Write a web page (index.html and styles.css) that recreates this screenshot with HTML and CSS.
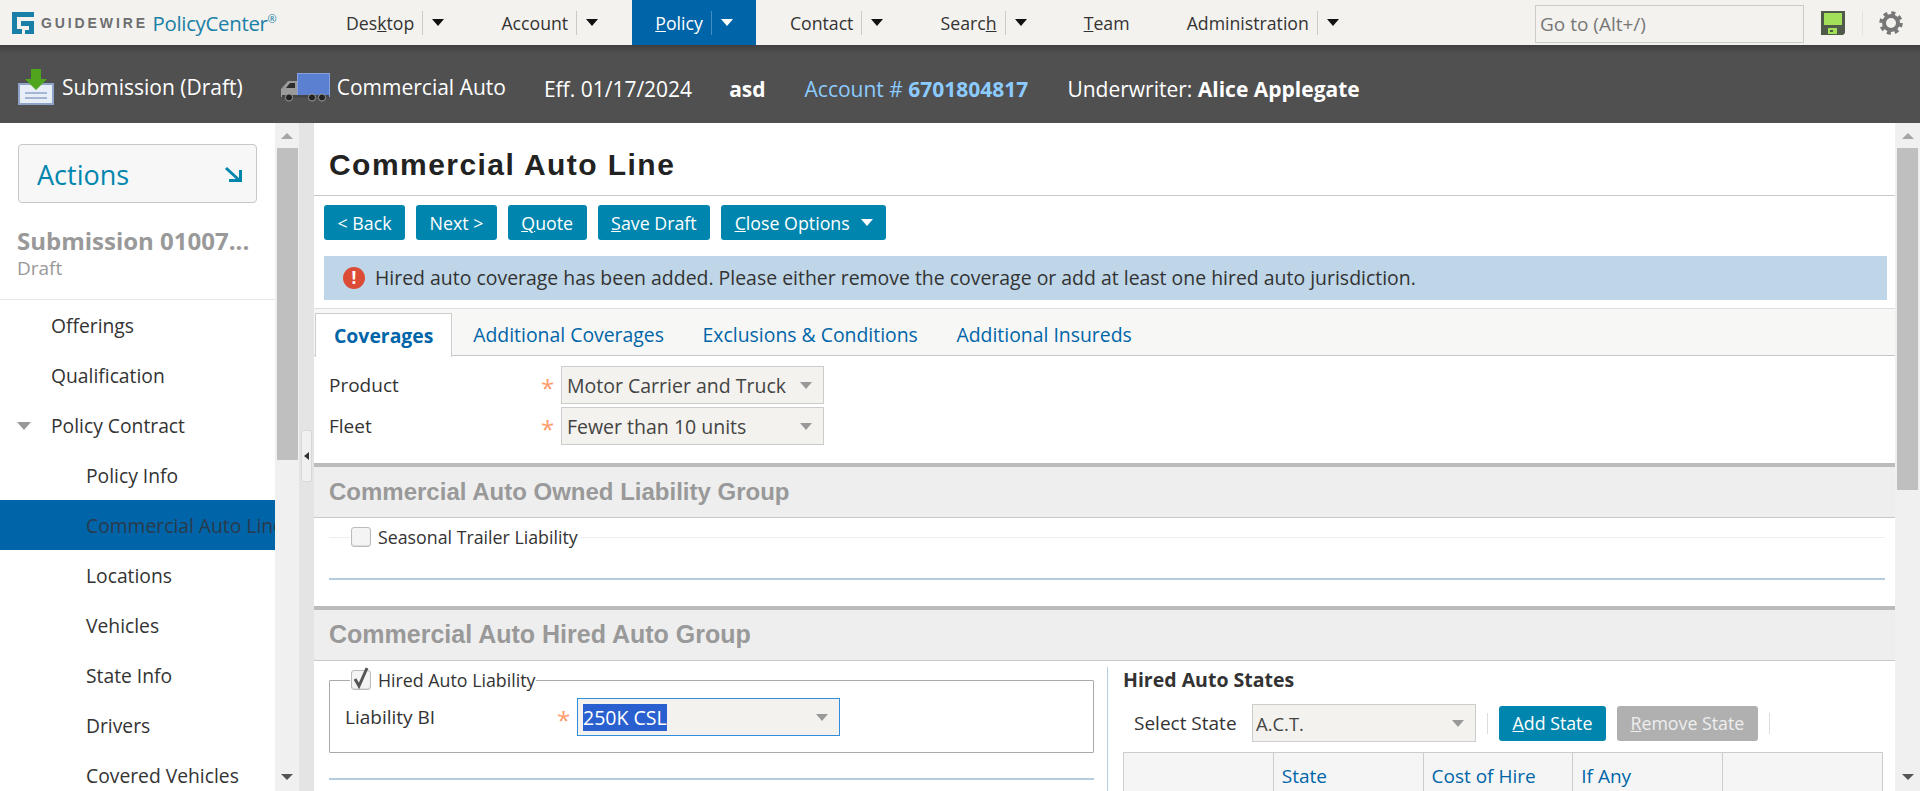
FILE: index.html
```html
<!DOCTYPE html>
<html lang="en">
<head>
  <meta charset="UTF-8" />
  <title>Guidewire PolicyCenter</title>
  <link rel="stylesheet" href="styles.css">
</head>
<body>
<header class="topbar">
  <div class="logo">
    <svg class="logo-mark" viewBox="0 0 22 22" width="22" height="22">
      <path fill="#1a7fa6" d="M0 0h22v5H5v12h5v5H0zM9 9h13v13h-9v-4h4v-4H9z"/>
    </svg>
    <span class="logo-word">GUIDEWIRE</span>
    <span class="logo-product">PolicyCenter<sup>®</sup></span>
  </div>
  <nav class="tabs-main">
    <a class="nav-item">Des<u>k</u>top<i class="nav-sep"></i><i class="caret"></i></a>
    <a class="nav-item">Account<i class="nav-sep"></i><i class="caret"></i></a>
    <a class="nav-item active"><u>P</u>olicy<i class="nav-sep"></i><i class="caret"></i></a>
    <a class="nav-item">Contact<i class="nav-sep"></i><i class="caret"></i></a>
    <a class="nav-item">Searc<u>h</u><i class="nav-sep"></i><i class="caret"></i></a>
    <a class="nav-item"><u>T</u>eam</a>
    <a class="nav-item">Administration<i class="nav-sep"></i><i class="caret"></i></a>
  </nav>
  <div class="top-tools">
    <input class="goto" type="text" placeholder="Go to (Alt+/)" />
    <svg viewBox="0 0 24 24" width="24" height="24">
      <path fill="#4f5a4a" d="M0 0h24v22l-2 2H0z"/>
      <rect fill="#a3e05a" x="3" y="2" width="18" height="12"/>
      <rect fill="#a3e05a" x="7" y="17" width="9" height="6"/>
      <rect fill="#4f5a4a" x="9" y="19" width="3" height="2"/>
    </svg>
    <i class="tool-sep"></i>
    <svg viewBox="0 0 24 24" width="24" height="24">
      <circle cx="12" cy="12" r="7" fill="none" stroke="#777" stroke-width="4"/>
      <circle cx="12" cy="12" r="10" fill="none" stroke="#777" stroke-width="3.500" stroke-dasharray="4 3.850"/>
    </svg>
  </div>
</header>

<div class="infobar">
  <span class="info-item info-sub">
    <svg viewBox="0 0 36 36" width="36" height="36">
      <path fill="#e8eef8" stroke="#8fa3c8" stroke-width="2" d="M1 15h34v20H1z"/>
      <path fill="none" stroke="#8fa3c8" stroke-width="1.500" d="M7 24h22M7 29h22"/>
      <path fill="#4fa51e" d="M13 0h10v10h6L18 21 7 10h6z"/>
    </svg>
    Submission (Draft)
  </span>
  <span class="info-item info-line">
    <svg viewBox="0 0 50 30" width="50" height="30">
      <rect x="16.500" y="1.500" width="32" height="23" fill="#5b80d2" stroke="#86a2dc"/>
      <path fill="#9a9a9a" d="M0 25v-8l7-8h9v16z"/>
      <path fill="#2c2c2c" d="M5 16l4-5h5v5z"/>
      <rect x="1" y="23" width="47" height="2.500" fill="#444"/>
      <circle cx="8" cy="25.500" r="3.600" fill="#222" stroke="#999"/>
      <circle cx="31" cy="25.500" r="3.600" fill="#222" stroke="#999"/>
      <circle cx="41" cy="25.500" r="3.600" fill="#222" stroke="#999"/>
    </svg>
    Commercial Auto
  </span>
  <span class="info-text info-eff">Eff. 01/17/2024</span>
  <b class="info-text info-name">asd</b>
  <span class="info-text info-acct">Account # <b>6701804817</b></span>
  <span class="info-text info-uw">Underwriter: <b>Alice Applegate</b></span>
</div>

<div class="workspace">
  <aside class="sidebar">
    <div class="actions-wrap">
      <div class="actions-btn">
        <span class="actions-label">Actions</span>
        <svg viewBox="0 0 18 18" width="18" height="18">
          <path fill="none" stroke="#0086ae" stroke-width="3" d="M2 3l13 12M5 15.500h11.500V5"/>
        </svg>
      </div>
    </div>
    <div class="job-title">
      <div class="job-name">Submission 01007...</div>
      <div class="job-state">Draft</div>
    </div>
    <ul class="side-list">
      <li>Offerings</li>
      <li>Qualification</li>
      <li class="open"><i class="open-tri"></i>Policy Contract</li>
      <li class="sub">Policy Info</li>
      <li class="sub current">Commercial Auto Line</li>
      <li class="sub">Locations</li>
      <li class="sub">Vehicles</li>
      <li class="sub">State Info</li>
      <li class="sub">Drivers</li>
      <li class="sub">Covered Vehicles</li>
    </ul>
  </aside>
  <div class="scrollbar scrollbar-side">
    <i class="sb-up"></i>
    <div class="sb-thumb"></div>
    <i class="sb-down"></i>
  </div>
  <div class="splitter">
    <div class="splitter-handle"><i></i></div>
  </div>

  <main class="content">
    <h1 class="page-title">Commercial Auto Line</h1>
    <div class="toolbar">
      <button class="btn">&lt; Back</button>
      <button class="btn">Next &gt;</button>
      <button class="btn"><u>Q</u>uote</button>
      <button class="btn"><u>S</u>ave Draft</button>
      <button class="btn"><u>C</u>lose Options<i class="caret caret-white"></i></button>
    </div>
    <div class="alert">
      <span class="alert-icon">!</span>
      Hired auto coverage has been added. Please either remove the coverage or add at least one hired auto jurisdiction.
    </div>
    <div class="tabs">
      <a class="tab active">Coverages</a>
      <a class="tab">Additional Coverages</a>
      <a class="tab">Exclusions &amp; Conditions</a>
      <a class="tab">Additional Insureds</a>
    </div>

    <div class="form-top">
      <div class="field">
        <label>Product</label><span class="req">*</span>
        <div class="select">Motor Carrier and Truck<i class="sel-arrow"></i></div>
      </div>
      <div class="field">
        <label>Fleet</label><span class="req">*</span>
        <div class="select">Fewer than 10 units<i class="sel-arrow"></i></div>
      </div>
    </div>

    <section class="group">
      <h2 class="group-head">Commercial Auto Owned Liability Group</h2>
      <div class="group-body group-owned">
        <fieldset class="cov cov-off">
          <legend><span class="check"></span>Seasonal Trailer Liability</legend>
        </fieldset>
      </div>
    </section>

    <section class="group group-hired">
      <h2 class="group-head">Commercial Auto Hired Auto Group</h2>
      <div class="hired-cols">
        <div class="hired-left">
          <fieldset class="cov cov-on">
            <legend>
              <span class="check">
                <svg viewBox="0 0 20 20" width="20" height="20">
                  <path fill="none" stroke="#555" stroke-width="3" d="M4 9l4 7 8-18"/>
                </svg>
              </span>Hired Auto Liability
            </legend>
            <div class="field field-bi">
              <label>Liability BI</label><span class="req">*</span>
              <div class="select select-focus"><span class="sel-text">250K CSL</span><i class="sel-arrow"></i></div>
            </div>
          </fieldset>
          <div class="rule-blue"></div>
        </div>
        <div class="hired-right">
          <h3 class="states-head">Hired Auto States</h3>
          <div class="states-bar">
            <label>Select State</label>
            <div class="select select-state">A.C.T.<i class="sel-arrow"></i></div>
            <i class="bar-sep"></i>
            <button class="btn"><u>A</u>dd State</button>
            <button class="btn btn-off"><u>R</u>emove State</button>
            <i class="bar-sep"></i>
          </div>
          <table class="states-table">
            <tr><th></th><th>State</th><th>Cost of Hire</th><th>If Any</th><th></th></tr>
          </table>
        </div>
      </div>
    </section>
  </main>
  <div class="scrollbar scrollbar-main">
    <i class="sb-up"></i>
    <div class="sb-thumb"></div>
    <i class="sb-down"></i>
  </div>
</div>
</body>
</html>
```

FILE: styles.css
```css
/* Reset and base */
* {
  box-sizing: border-box;
}
html, body {
  height: 100%;
}
body {
  margin: 0;
  display: flex;
  flex-direction: column;
  overflow: hidden;
  font-family: 'Open Sans', 'Noto Sans', sans-serif;
  font-size: 19px;
  color: #333;
  background: #fff;
}
i {
  display: block;
  font-style: normal;
}

/* Top bar */
.topbar {
  flex: none;
  height: 45px;
  display: flex;
  align-items: center;
  background: #f3f2ee;
}
.logo {
  width: 323px;
  padding-left: 12px;
  display: flex;
  align-items: center;
  flex: none;
}
.logo-word {
  margin-left: 7px;
  font-family: 'Liberation Sans', sans-serif;
  font-weight: 700;
  font-size: 14px;
  letter-spacing: 2.900px;
  color: #6d6e70;
}
.logo-product {
  margin-left: 4.500px;
  font-size: 20.400px;
  letter-spacing: -0.3px;
  color: #1a7fa6;
}
.logo-product sup {
  font-size: 11px;
  line-height: 0;
}
.tabs-main {
  display: flex;
  gap: 11.100px;
  height: 45px;
}
.nav-item {
  display: flex;
  align-items: center;
  padding: 0 23px;
  color: #333;
  font-size: 17.700px;
}
.nav-item.active {
  background: #0065a8;
  color: #fff;
}
.nav-sep {
  width: 1px;
  height: 24px;
  margin: 0 9px 0 8px;
  background: #c9c9c9;
}
.nav-item.active .nav-sep {
  background: #3f8ec4;
}
.caret {
  width: 0;
  height: 0;
  border-left: 6px solid transparent;
  border-right: 6px solid transparent;
  border-top: 7px solid #111;
}
.nav-item.active .caret,
.caret-white {
  border-top-color: #fff;
}
.top-tools {
  margin-left: auto;
  display: flex;
  align-items: center;
  padding-right: 17px;
}
.goto {
  width: 269px;
  height: 38px;
  margin: 5px 17px 2px 0;
  padding: 0 4px;
  border: 1px solid #ccc;
  background: #f3f2ee;
  font-family: inherit;
  font-size: 19px;
}
.goto::placeholder {
  color: #777;
  opacity: 1;
}
.tool-sep {
  width: 1px;
  height: 24px;
  margin: 0 16px 0 17px;
  background: #e2e2e0;
}

/* Dark info bar */
.infobar {
  flex: none;
  height: 78px;
  display: flex;
  align-items: center;
  padding: 10px 0 0 18px;
  background: linear-gradient(#3f3f3f, #505050 9px);
  color: #fff;
  font-size: 21px;
}
.info-item {
  display: flex;
  align-items: center;
  gap: 8px;
  margin-top: -5px;
}
.info-line {
  margin-left: 38px;
  gap: 6px;
}
.info-eff {
  margin-left: 38px;
}
.info-name {
  margin-left: 37px;
}
.info-acct {
  margin-left: 39px;
  color: #8ccbff;
}
.info-uw {
  margin-left: 39px;
}

/* Workspace */
.workspace {
  flex: 1;
  min-height: 0;
  display: flex;
}
.sidebar {
  flex: none;
  width: 275px;
  overflow: hidden;
}
.actions-wrap {
  padding: 21px 18px 0;
}
.actions-btn {
  height: 59px;
  padding: 0 14px 0 18px;
  display: flex;
  align-items: center;
  justify-content: space-between;
  border: 1px solid #c8c8c8;
  border-radius: 4px;
  background: #f7f7f7;
  color: #0086ae;
  font-size: 27px;
}
.actions-label {
  padding-top: 2px;
}
.job-title {
  padding: 23px 0 19px 17px;
  border-bottom: 1px solid #e8e8e8;
}
.job-name {
  font-size: 24px;
  font-weight: 700;
  line-height: 30px;
  color: #999;
  white-space: nowrap;
}
.job-state {
  font-size: 19px;
  line-height: 24px;
  color: #999;
}
.side-list {
  list-style: none;
  margin: 0;
  padding: 0;
  font-size: 19.300px;
}
.side-list li {
  position: relative;
  height: 50px;
  line-height: 52px;
  padding-left: 51px;
  white-space: nowrap;
  overflow: hidden;
}
.side-list li.sub {
  padding-left: 86px;
}
.side-list li.current {
  background: #0065a8;
  color: #2b3a4a;
}
.open-tri {
  position: absolute;
  left: 17px;
  top: 22px;
  width: 0;
  height: 0;
  border-left: 7px solid transparent;
  border-right: 7px solid transparent;
  border-top: 8px solid #999;
}

/* Scrollbars */
.scrollbar {
  flex: none;
  display: flex;
  flex-direction: column;
  align-items: center;
  background: #f0f0f0;
  padding-top: 10px;
}
.scrollbar-side {
  width: 24px;
}
.scrollbar-main {
  width: 25px;
}
.sb-thumb {
  width: 21px;
  margin-top: 9px;
  background: #bfbfbf;
}
.scrollbar-side .sb-thumb {
  height: 312px;
}
.scrollbar-main .sb-thumb {
  height: 342px;
}
.sb-up,
.sb-down {
  width: 0;
  height: 0;
  border-left: 6px solid transparent;
  border-right: 6px solid transparent;
}
.sb-up {
  border-bottom: 6px solid #a5a5a5;
}
.sb-down {
  margin-top: auto;
  margin-bottom: 11px;
  border-top: 6px solid #555;
}
.splitter {
  flex: none;
  width: 15px;
  background: #e4e4e4;
  padding: 307px 2px 0;
}
.splitter-handle {
  height: 52px;
  display: flex;
  align-items: center;
  justify-content: center;
  background: #f0f0f0;
  border: 1px solid #d8d8d8;
  border-radius: 2px;
}
.splitter-handle i {
  border-top: 4px solid transparent;
  border-bottom: 4px solid transparent;
  border-right: 5px solid #333;
}

/* Main content */
.content {
  flex: 1;
  min-width: 0;
  overflow: hidden;
}
.page-title {
  margin: 0;
  height: 73px;
  padding: 0 15px;
  border-bottom: 1px solid #c8c8c8;
  font-family: 'Liberation Sans', sans-serif;
  font-size: 30px;
  font-weight: 700;
  letter-spacing: 1.450px;
  line-height: 84px;
  color: #222;
}
.toolbar {
  display: flex;
  gap: 11px;
  padding: 9px 10px 16px;
}
.btn {
  height: 35px;
  padding: 0 13.500px;
  display: flex;
  align-items: center;
  border: none;
  border-radius: 3px;
  background: #0086ae;
  color: #fff;
  font-family: inherit;
  font-size: 17.800px;
}
.btn-off {
  background: #b0b0b0;
  color: #eee;
}
.caret-white {
  margin-left: 11px;
}
.alert {
  height: 44px;
  margin: 0 8px 0 10px;
  padding: 0 0 2px 19px;
  display: flex;
  align-items: center;
  gap: 10px;
  background: #bed6e8;
  color: #333;
  font-size: 19.450px;
}
.alert-icon {
  width: 22px;
  height: 22px;
  margin-top: 2px;
  border-radius: 50%;
  background: #dc4b36;
  color: #fff;
  font-weight: 700;
  font-size: 17px;
  line-height: 22px;
  text-align: center;
}
.tabs {
  margin-top: 8px;
  height: 48px;
  padding: 4px 0 0 1px;
  display: flex;
  border-top: 1px solid #ddd;
  border-bottom: 1px solid #c8c8c8;
  background: #f7f7f5;
}
.tab {
  height: 43px;
  line-height: 43px;
  padding: 0 19.300px;
  color: #0065a8;
  font-size: 19.400px;
}
.tab.active {
  height: 44px;
  padding: 0 18px;
  margin-right: 1.500px;
  background: #fff;
  border: 1px solid #ccc;
  border-bottom: none;
  font-weight: 700;
}
.form-top {
  height: 107px;
  padding: 10px 0 0 15px;
}
.field {
  display: flex;
  align-items: center;
  margin-bottom: 3px;
}
.field label {
  width: 212px;
  padding-bottom: 1px;
  font-size: 19px;
}
.req {
  width: 20px;
  color: #ff9b6b;
  font-size: 24px;
  line-height: 22px;
  padding-top: 5px;
}
.select {
  position: relative;
  width: 263px;
  height: 38px;
  line-height: 37px;
  padding-left: 5px;
  border: 1px solid #ccc;
  background: #f3f2ee;
  color: #444;
  font-size: 19.500px;
}
.sel-arrow {
  position: absolute;
  right: 11px;
  top: 15px;
  border-left: 6px solid transparent;
  border-right: 6px solid transparent;
  border-top: 7px solid #999;
}
.select-focus {
  border-color: #2f8fdc;
}
.sel-text {
  display: inline-block;
  line-height: 27px;
  background: #2a5fd0;
  color: #fff;
}
.select-state {
  width: 224px;
  font-size: 18.400px;
  padding-left: 3px;
}

/* Groups */
.group-head {
  margin: 0;
  height: 55px;
  padding-left: 15px;
  border-top: 4px solid #bbb;
  border-bottom: 1px solid #c8c8c8;
  background: #eee;
  font-family: 'Liberation Sans', sans-serif;
  font-size: 24px;
  font-weight: 700;
  line-height: 49px;
  color: #999;
}
.group-hired .group-head {
  font-size: 25px;
}
.group-owned {
  height: 62px;
  margin: 0 10px 0 15px;
  padding-top: 7px;
  border-bottom: 2px solid #b4cde0;
}
.cov {
  margin: 0;
  padding: 0;
  min-width: 0;
}
.cov legend {
  margin-left: 21px;
  padding: 0 1px;
  display: flex;
  align-items: center;
  font-size: 17.800px;
  white-space: nowrap;
}
.cov-off {
  border: none;
  border-top: 1px solid #eee;
}
.check {
  flex: none;
  width: 20px;
  height: 20px;
  margin-right: 7px;
  border: 1px solid #bbb;
  border-radius: 3px;
  background: #f4f4f4;
  box-shadow: inset 0 -1px 1px #ddd;
}
.check svg {
  display: block;
  margin: -1px 0 0 -1px;
  overflow: visible;
}
.group-hired {
  margin-top: 26px;
}
.hired-cols {
  display: flex;
  padding-left: 15px;
}
.hired-left {
  flex: none;
  width: 765px;
  padding-top: 7px;
}
.cov-on {
  height: 85px;
  border: 1px solid #aaa;
  border-radius: 1px;
  padding-left: 15px;
}
.cov-on legend {
  margin-left: 5px;
}
.field-bi {
  margin-top: 6px;
}
.rule-blue {
  height: 2px;
  margin-top: 25px;
  background: #b4cde0;
}
.hired-right {
  flex: none;
  width: 777px;
  margin: 6px 0 0 13px;
  padding-left: 15px;
  border-left: 1px solid #b4cde0;
}
.states-head {
  margin: 0;
  font-size: 19.500px;
  font-weight: 700;
  line-height: 26px;
  color: #333;
}
.states-bar {
  margin-top: 11px;
  padding-left: 11px;
  display: flex;
  align-items: center;
}
.states-bar label {
  width: 118px;
  font-size: 19px;
}
.states-bar .btn + .btn {
  margin-left: 11px;
}
.bar-sep {
  width: 1px;
  height: 21px;
  margin: 0 11px;
  background: #ddd;
}
.states-table {
  width: 760px;
  margin-top: 10px;
  border-collapse: collapse;
  table-layout: fixed;
}
.states-table th {
  height: 46px;
  padding: 0 8px;
  border: 1px solid #ccc;
  background: #f5f5f5;
  color: #0065a8;
  font-weight: 400;
  font-size: 19px;
  text-align: left;
}
.states-table th:last-child {
  width: 160px;
}
```
